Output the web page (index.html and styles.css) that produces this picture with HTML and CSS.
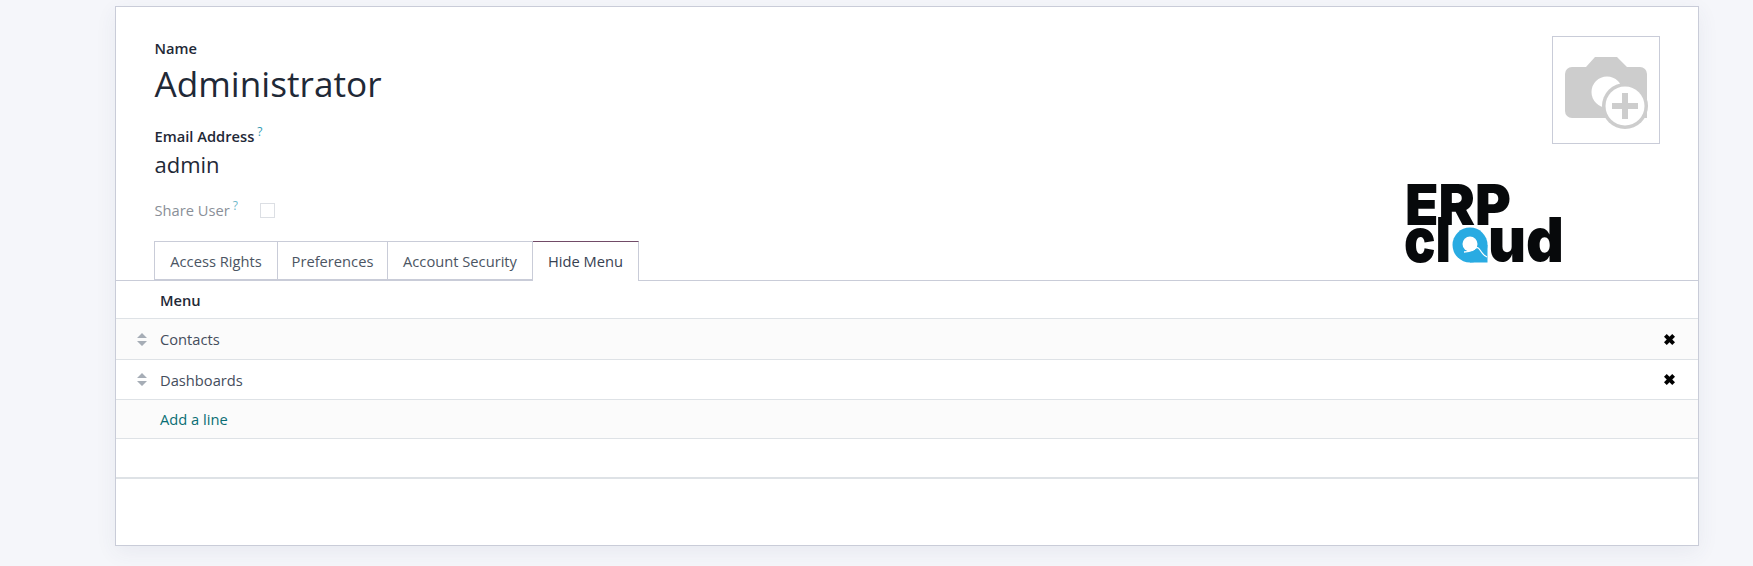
FILE: index.html
```html
<!DOCTYPE html>
<html lang="en">
<head>
<meta charset="utf-8">
<title>Administrator</title>
<link rel="stylesheet" href="styles.css">
</head>
<body>
<main class="sheet">
  <section class="head">
    <div class="avatar">
      <svg width="106" height="106" viewBox="0 0 106 106">
        <path class="cam" d="M19 30h14l9-10h22l10 10h13a7 7 0 0 1 7 7v44H19a7 7 0 0 1-7-7V37a7 7 0 0 1 7-7Z"/>
        <circle class="lens" cx="54" cy="55" r="15.500"/>
        <circle class="ring" cx="72" cy="69" r="23"/>
        <circle class="disc" cx="72" cy="69" r="19.500"/>
        <path class="cam" d="M69 56h6v10h10v6H75v10h-6V72H59v-6h10Z"/>
      </svg>
    </div>
    <svg class="logo" width="170" height="130" viewBox="0 -30 170 130">
      <text class="logo-erp" x="5" y="45" textLength="106" lengthAdjust="spacingAndGlyphs">ERP</text>
      <text class="logo-cl" x="4" y="82" textLength="47" lengthAdjust="spacingAndGlyphs">cl</text>
      <circle class="q-body" cx="70" cy="65" r="17.500"/>
      <path class="q-body" d="M70 65h17.500v17.500H70Z"/>
      <circle class="q-hole" cx="70" cy="64" r="7.500"/>
      <path class="q-wave" d="M64 72c4 0 7-1 10-3s4-2 6 1 4 6 7 7"/>
      <text class="logo-ud" x="88" y="82" textLength="76" lengthAdjust="spacingAndGlyphs">ud</text>
    </svg>
    <label class="lbl">Name</label>
    <h1 class="title">Administrator</h1>
    <label class="lbl lbl-email">Email Address<sup class="hint">?</sup></label>
    <div class="login">admin</div>
    <div class="share">
      <span class="share-lbl">Share User<sup class="hint">?</sup></span>
      <span class="check"></span>
    </div>
  </section>
  <nav class="tabs">
    <a class="tab tab-a">Access Rights</a>
    <a class="tab tab-b">Preferences</a>
    <a class="tab tab-c">Account Security</a>
    <a class="tab tab-d tab-on">Hide Menu</a>
  </nav>
  <div class="list">
    <div class="row row-head"><span class="cell-name">Menu</span></div>
    <div class="row row-alt">
      <svg class="drag" width="10" height="13" viewBox="0 0 10 13"><path d="M5 0l5 5H0ZM0 8h10l-5 5Z"/></svg>
      <span class="cell-name">Contacts</span>
      <svg class="del" width="11" height="11" viewBox="1 1 10 10"><path d="M1 3.500L3.500 1 6 3.500 8.500 1 11 3.500 8.500 6 11 8.500 8.500 11 6 8.500 3.500 11 1 8.500 3.500 6Z"/></svg>
    </div>
    <div class="row">
      <svg class="drag" width="10" height="13" viewBox="0 0 10 13"><path d="M5 0l5 5H0ZM0 8h10l-5 5Z"/></svg>
      <span class="cell-name">Dashboards</span>
      <svg class="del" width="11" height="11" viewBox="1 1 10 10"><path d="M1 3.500L3.500 1 6 3.500 8.500 1 11 3.500 8.500 6 11 8.500 8.500 11 6 8.500 3.500 11 1 8.500 3.500 6Z"/></svg>
    </div>
    <div class="row row-alt row-add"><a class="cell-name add">Add a line</a></div>
    <div class="row row-empty"></div>
  </div>
</main>
</body>
</html>
```
FILE: styles.css
```css
* { box-sizing: border-box; }
html, body { margin: 0; height: 566px; overflow: hidden; }
body {
  background: #f5f6fa;
  font-family: "Open Sans", "Noto Sans", sans-serif;
  font-size: 14.700px;
  color: #454d5c;
}
.sheet {
  position: relative;
  width: 1584px;
  height: 540px;
  margin: 6px 0 0 115px;
  background: #fff;
  border: 1px solid #c9ccd8;
  box-shadow: 0 6px 20px rgba(60, 70, 110, .07);
}
.head {
  position: relative;
  height: 234px;
  padding: 32px 0 0 38.500px;
}
.avatar {
  position: absolute;
  top: 29px;
  right: 38px;
  width: 108px;
  height: 108px;
  border: 1px solid #c9ccd8;
  display: flex;
  align-items: center;
  justify-content: center;
}
.cam { fill: #cdcdcd; }
.lens { fill: #fff; }
.ring { fill: #cdcdcd; }
.disc { fill: #fff; }
.logo { position: absolute; left: 1284px; top: 143px; }
.logo-erp, .logo-cl, .logo-ud {
  font-family: Inter, Lato, "Liberation Sans", sans-serif;
  font-weight: 900;
  fill: #07090b;
}
.logo-erp { font-size: 57px; }
.logo-cl, .logo-ud { font-size: 62px; }
.q-body { fill: #29abe2; }
.q-hole { fill: #fff; }
.q-wave { fill: none; stroke: #fff; stroke-width: 1.300px; }
.lbl {
  display: block;
  font-size: 14.700px;
  font-weight: 600;
  line-height: 19px;
  color: #1f2937;
}
.title {
  margin: 2px 0 0;
  font-size: 35.200px;
  font-weight: 400;
  line-height: 46px;
  color: #1f2937;
}
.lbl-email { margin-top: 21px; }
.hint {
  margin-left: 3px;
  font-size: 12px;
  font-weight: 400;
  line-height: 0;
  color: #2f9bb3;
}
.login {
  margin-top: 4px;
  font-size: 22px;
  line-height: 28px;
  color: #1f2937;
}
.share {
  display: flex;
  align-items: center;
  margin-top: 21px;
  height: 22px;
  color: #8a8f98;
}
.share-lbl { width: 105px; }
.share .hint { opacity: .7; }
.check {
  width: 15px;
  height: 15px;
  border: 1px solid #dcdfe4;
}
.tabs {
  display: flex;
  height: 40px;
  padding-left: 38px;
  border-bottom: 1px solid #c9ccd8;
}
.tab {
  height: 39px;
  line-height: 38px;
  text-align: center;
  border: 1px solid #c9ccd8;
  border-left-width: 0;
  color: #4b5563;
  white-space: nowrap;
}
.tab-a { width: 124px; border-left-width: 1px; }
.tab-b { width: 110px; }
.tab-c { width: 145px; }
.tab-d { width: 106px; }
.tab-on {
  height: 40px;
  color: #374151;
  background: #fff;
  border-top-color: #714b67;
  border-bottom: 0;
}
.row {
  display: flex;
  align-items: center;
  position: relative;
  height: 40px;
  padding-left: 44px;
  border-bottom: 1px solid #dee2e6;
}
.row-head { height: 38px; }
.row-head .cell-name { font-weight: 600; color: #1f2937; }
.row-alt { background: #fbfbfb; }
.row:nth-child(2) { height: 41px; }
.row-add { height: 39px; }
.row-empty { height: 40px; border-bottom: 2px solid #dee2e6; }
.cell-name { flex: 1; }
.drag { position: absolute; left: 21px; fill: #a6adb6; }
.del { margin-right: 23px; fill: #000; }
.add { color: #0a6e74; }
```
